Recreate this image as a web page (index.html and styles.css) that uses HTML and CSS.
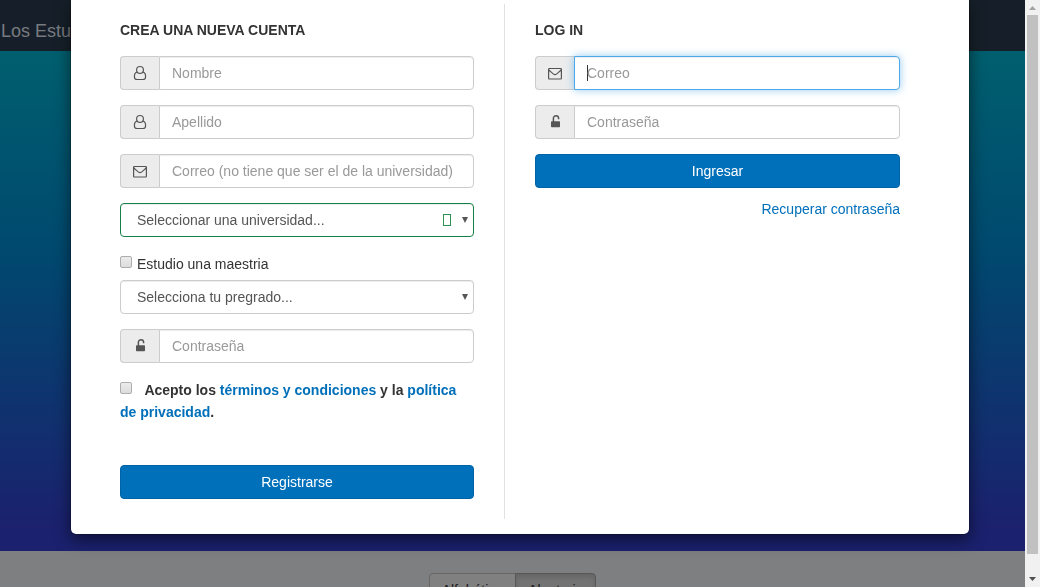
FILE: index.html
```html
<!DOCTYPE html>
<html lang="es">
<head>
<meta charset="utf-8">
<title>Los Estudiantes</title>
<link rel="stylesheet" href="styles.css">
</head>
<body>
<svg class="sprite" aria-hidden="true">
  <symbol id="user" viewBox="0 0 14 16"><g fill="none" stroke="currentColor" stroke-width="1.2"><circle cx="7" cy="4.900" r="3.400"/><path d="M4.300 7.200C2.200 7.400 1.400 9.500 1.400 11.700c0 1.800 1 2.800 2.700 2.800h5.800c1.700 0 2.700-1 2.700-2.800 0-2.200-.8-4.300-2.900-4.500"/></g></symbol>
  <symbol id="mail" viewBox="0 0 14 16"><g fill="none" stroke="currentColor" stroke-width="1.2"><rect x=".6" y="3.500" width="12.800" height="10.500" rx=".7"/><path d="M.6 4.800C2.500 6.600 4 7.700 5.300 8.900c1.200 1 2.200 1 3.400 0C10 7.700 11.500 6.600 13.400 4.800"/></g></symbol>
  <symbol id="lock" viewBox="0 0 14 16"><path d="M5.400 8V4.300a2.600 2.600 0 0 1 5.200 0v1" fill="none" stroke="currentColor" stroke-width="1.500"/><rect x="3" y="7.200" width="9" height="6" rx=".8" fill="currentColor"/></symbol>
</svg>

<div class="page">
  <nav class="navbar"><a class="brand" href="#">Los Estudiantes</a></nav>
  <div class="hero"></div>
  <div class="sorting">
    <div class="button-group">
      <button type="button" class="sort-button">Alfabético</button>
      <button type="button" class="sort-button active">Aleatorio</button>
    </div>
  </div>
</div>

<div class="overlay">
  <div class="modal" role="dialog" aria-label="Cuenta">
    <form class="column register">
      <h2 class="title">CREA UNA NUEVA CUENTA</h2>
      <div class="field">
        <label class="addon" for="name" aria-label="Nombre"><svg class="icon"><use href="#user"/></svg></label>
        <input class="control" id="name" type="text" placeholder="Nombre">
      </div>
      <div class="field">
        <label class="addon" for="surname" aria-label="Apellido"><svg class="icon"><use href="#user"/></svg></label>
        <input class="control" id="surname" type="text" placeholder="Apellido">
      </div>
      <div class="field">
        <label class="addon" for="email" aria-label="Correo"><svg class="icon"><use href="#mail"/></svg></label>
        <input class="control" id="email" type="email" placeholder="Correo (no tiene que ser el de la universidad)">
      </div>
      <div class="field">
        <select class="select valid" aria-label="Universidad"><option>Seleccionar una universidad...</option></select>
        <span class="feedback"></span>
      </div>
      <div class="masters">
        <input class="checkbox" type="checkbox" id="masters">
        <label for="masters">Estudio una maestria</label>
      </div>
      <div class="field">
        <select class="select" aria-label="Pregrado"><option>Selecciona tu pregrado...</option></select>
      </div>
      <div class="field">
        <label class="addon" for="password" aria-label="Contraseña"><svg class="icon"><use href="#lock"/></svg></label>
        <input class="control" id="password" type="password" placeholder="Contraseña">
      </div>
      <div class="terms">
        <input class="checkbox" type="checkbox" id="terms">
        <label for="terms">Acepto los <a href="#">términos y condiciones</a> y la <a href="#">política de privacidad</a>.</label>
      </div>
      <button type="submit" class="primary">Registrarse</button>
    </form>
    <form class="column login">
      <h2 class="title">LOG IN</h2>
      <div class="field">
        <label class="addon" for="login-email" aria-label="Correo"><svg class="icon"><use href="#mail"/></svg></label>
        <input class="control focused" id="login-email" type="email" placeholder="Correo">
      </div>
      <div class="field">
        <label class="addon" for="login-password" aria-label="Contraseña"><svg class="icon"><use href="#lock"/></svg></label>
        <input class="control" id="login-password" type="password" placeholder="Contraseña">
      </div>
      <button type="submit" class="primary">Ingresar</button>
      <a class="recover" href="#">Recuperar contraseña</a>
    </form>
  </div>
</div>

<div class="scrollbar" aria-hidden="true">
  <svg class="arrow" viewBox="0 0 15 15"><path d="M4 10h7L7.500 6z" fill="#a3a3a3"/></svg>
  <div class="thumb"></div>
  <svg class="arrow" viewBox="0 0 15 15"><path d="M4 5h7L7.500 9z" fill="#505050"/></svg>
</div>
</body>
</html>
```

FILE: styles.css
```css
* { box-sizing: border-box; }
body {
  margin: 0;
  height: 100vh;
  overflow: hidden;
  font: 14px/20px "Liberation Sans", Arial, sans-serif;
  color: #333;
}
button, input, select { font: inherit; margin: 0; }
a { color: #006fba; text-decoration: none; }
.sprite { display: none; }

.page { padding-right: 15px; background: #7e7f80; }
.navbar { height: 51px; padding: 21px 1px 0; background: #161f29; }
.brand { font-size: 18px; color: #777b80; }
.hero { height: 500px; background: linear-gradient(#005f6e, #00496f 40%, #1b216e 95%); }
.sorting { padding-top: 22px; }
.button-group { display: flex; justify-content: center; }
.sort-button {
  padding: 6px 12px;
  border: 1px solid #666;
  border-radius: 4px 0 0 4px;
  background: #808080;
  color: #1a1a1a;
}
.sort-button.active {
  margin-left: -1px;
  border-color: #575757;
  border-radius: 0 4px 4px 0;
  background: #737373;
  box-shadow: inset 0 3px 5px rgba(0, 0, 0, .125);
}

.overlay { position: fixed; inset: 0; }
.modal {
  display: flex;
  max-width: 900px;
  margin: 0 auto;
  padding: 4px 69px 15px 49px;
  border: 1px solid rgba(0, 0, 0, .2);
  border-top: 0;
  border-radius: 0 0 6px 6px;
  background: #fff;
  background-clip: padding-box;
  box-shadow: 0 5px 15px rgba(0, 0, 0, .5);
}
.column { padding: 16px 0 20px; }
.register { flex: 354 1 0; padding-right: 30px; border-right: 1px solid #e1e1e1; }
.login { flex: 365 1 0; padding-left: 30px; }
.title { margin: 0 0 16px; font-size: 14px; font-weight: bold; line-height: 20px; }

.field { display: flex; position: relative; margin-bottom: 15px; }
.addon {
  display: flex;
  align-items: center;
  justify-content: center;
  width: 39px;
  border: 1px solid #ccc;
  border-right: 0;
  border-radius: 4px 0 0 4px;
  background: #ececec;
  color: #555;
}
.icon { width: 14px; height: 16px; }
.control, .select {
  flex: 1;
  min-width: 0;
  height: 34px;
  border: 1px solid #ccc;
  background-color: #fff;
  box-shadow: inset 0 1px 1px rgba(0, 0, 0, .075);
  color: #555;
}
.control { padding: 6px 12px; border-radius: 0 4px 4px 0; outline: 0; }
.control::placeholder { color: #999; opacity: 1; }
.focused {
  border-color: #4fa8e8;
  background: linear-gradient(#333, #333) 12px 8px / 1px 16px no-repeat #fff;
  box-shadow: inset 0 1px 1px rgba(0, 0, 0, .075), 0 0 8px rgba(79, 168, 232, .6);
}
.select {
  appearance: none;
  padding: 6px 32px 6px 16px;
  border-radius: 4px;
}
.field:has(.select)::after {
  content: "";
  position: absolute;
  top: 14px;
  right: 6px;
  border: 3px solid transparent;
  border-top: 6px solid #555;
  border-bottom: 0;
}
.valid { border-color: #168048; }
.feedback {
  position: absolute;
  top: 11px;
  right: 23px;
  width: 8px;
  height: 12px;
  border: 1px solid #2c9154;
}
.checkbox {
  appearance: none;
  width: 12px;
  height: 12px;
  border: 1px solid #adadad;
  border-radius: 2px;
  background: linear-gradient(#ececec, #dcdcdc);
}
.masters { display: flex; gap: 5px; height: 28px; padding-top: 2px; }
.masters .checkbox { margin-top: 2px; }
.terms { margin: 16px 0 42px; font-weight: bold; line-height: 22px; }
.terms .checkbox { margin: 0 9px 1px 0; }
.primary {
  display: block;
  width: 100%;
  height: 34px;
  padding: 0;
  border: 1px solid #0063a5;
  border-radius: 4px;
  background: #0070ba;
  color: #fff;
}
.recover { display: block; margin-top: 11px; text-align: right; }

.scrollbar {
  position: fixed;
  inset: 0 0 0 auto;
  display: flex;
  flex-direction: column;
  width: 15px;
  background: #f1f1f1;
}
.arrow { flex: none; width: 15px; height: 15px; }
.thumb { flex: 1; margin: 0 2px 18px; background: #c1c1c1; }
```
